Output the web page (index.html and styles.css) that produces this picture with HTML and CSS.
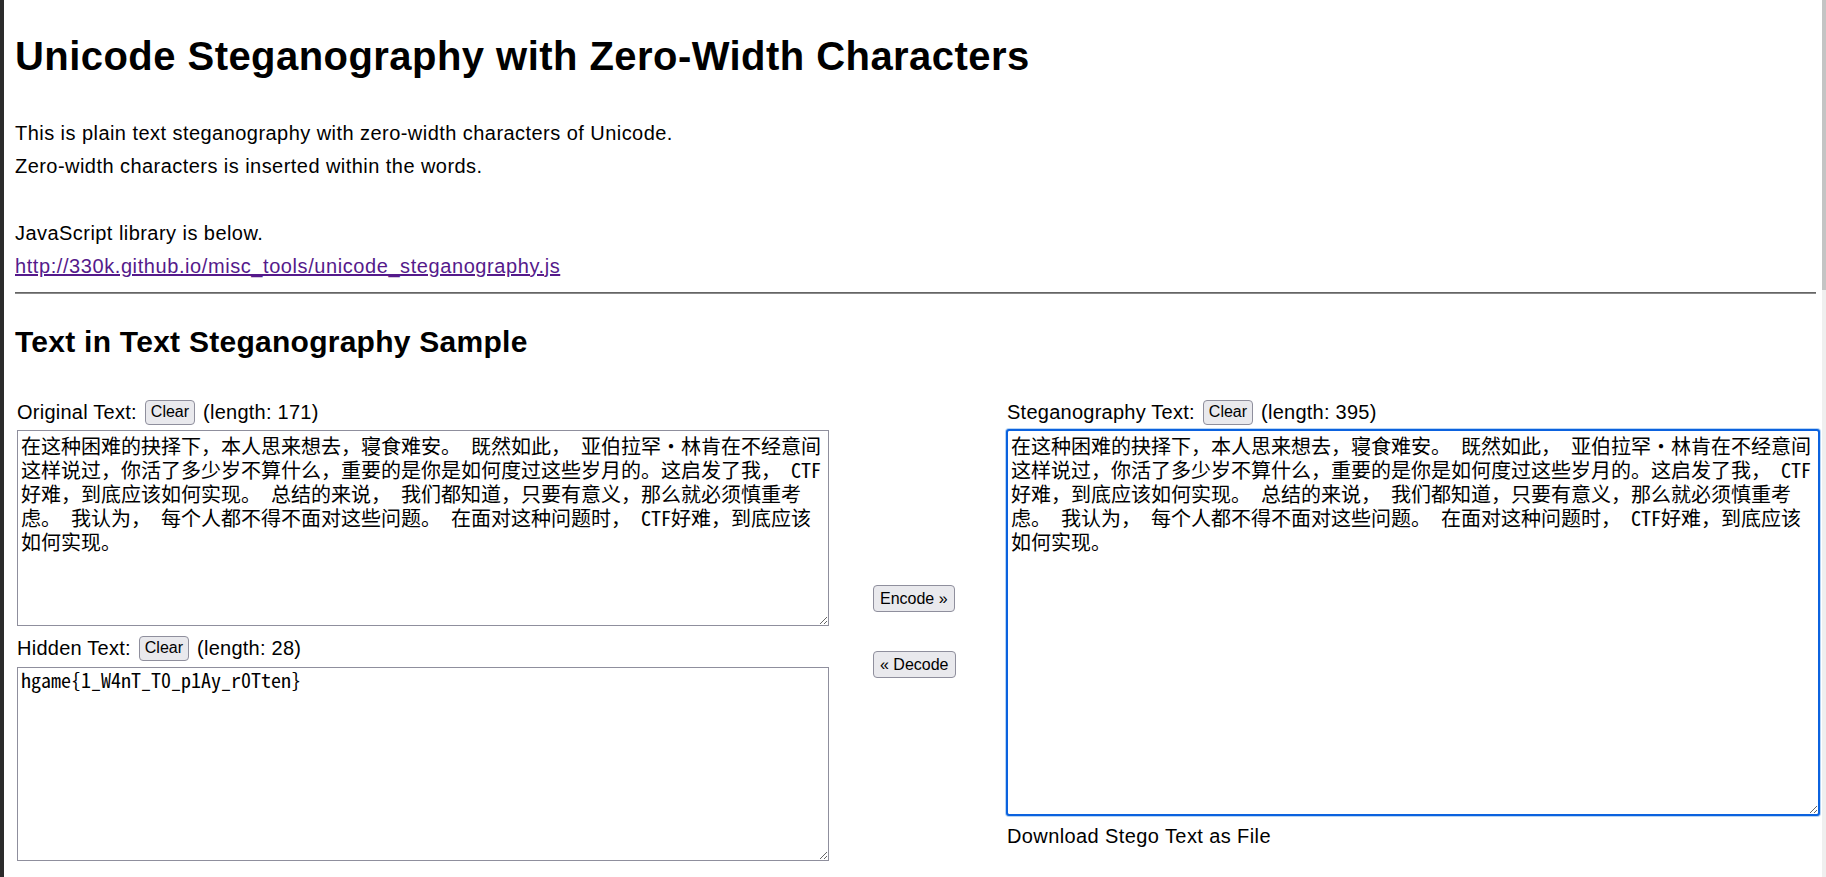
FILE: index.html
```html
<!DOCTYPE html>
<html lang="en">
<head>
<meta charset="utf-8">
<title>Unicode Steganography with Zero-Width Characters</title>
<link rel="stylesheet" href="styles.css">
</head>
<body>
<div class="edge-left"></div>
<div class="page">
  <h1 class="title">Unicode Steganography with Zero-Width Characters</h1>
  <p class="intro">This is plain text steganography with zero-width characters of Unicode.<br>Zero-width characters is inserted within the words.<br><br>JavaScript library is below.<br><a class="lib-link" href="#">http://330k.github.io/misc_tools/unicode_steganography.js</a></p>
  <hr class="rule">
  <h2 class="subtitle">Text in Text Steganography Sample</h2>
  <div class="sample">
    <div class="col col-left">
      <div class="label-row"><span class="label">Original Text:</span><button class="btn-clear" type="button">Clear</button><span class="label">(length: 171)</span></div>
      <textarea class="box box-original">在这种困难的抉择下，本人思来想去，寝食难安。 既然如此， 亚伯拉罕·林肯在不经意间
这样说过，你活了多少岁不算什么，重要的是你是如何度过这些岁月的。这启发了我， CTF
好难，到底应该如何实现。 总结的来说， 我们都知道，只要有意义，那么就必须慎重考
虑。 我认为， 每个人都不得不面对这些问题。 在面对这种问题时， CTF好难，到底应该
如何实现。</textarea>
      <div class="label-row label-row-second"><span class="label">Hidden Text:</span><button class="btn-clear" type="button">Clear</button><span class="label">(length: 28)</span></div>
      <textarea class="box box-hidden">hgame{1_W4nT_T0_p1Ay_r0Tten}</textarea>
    </div>
    <div class="col-middle">
      <button class="btn-action" type="button">Encode »</button>
      <button class="btn-action" type="button">« Decode</button>
    </div>
    <div class="col col-right">
      <div class="label-row"><span class="label">Steganography Text:</span><button class="btn-clear" type="button">Clear</button><span class="label">(length: 395)</span></div>
      <textarea class="box box-stego">在这种困难的抉择下，本人思来想去，寝食难安。 既然如此， 亚伯拉罕·林肯在不经意间
这样说过，你活了多少岁不算什么，重要的是你是如何度过这些岁月的。这启发了我， CTF
好难，到底应该如何实现。 总结的来说， 我们都知道，只要有意义，那么就必须慎重考
虑。 我认为， 每个人都不得不面对这些问题。 在面对这种问题时， CTF好难，到底应该
如何实现。</textarea>
      <div class="download">Download Stego Text as File</div>
    </div>
  </div>
</div>
<div class="edge-right"></div>
</body>
</html>
```

FILE: styles.css
```css
html {
  overflow: hidden;
}

body {
  margin: 0;
  display: flex;
  min-height: 877px;
  background: #ffffff;
  color: #000000;
  font-family: "Liberation Sans", Arial, sans-serif;
}

.edge-left {
  flex: none;
  width: 4px;
  background: #2b2b2b;
}

.edge-right {
  flex: none;
  width: 4px;
  background: linear-gradient(#c4c4c4 0, #c4c4c4 290px, #efefef 290px, #efefef 100%);
}

.page {
  flex: 1;
  min-width: 0;
  padding: 0 6px 0 11px;
}

.title {
  margin: 33px 0 0;
  font-size: 40px;
  font-weight: bold;
  line-height: 46px;
  letter-spacing: 0.45px;
}

.intro {
  margin: 38px 0 0;
  font-size: 20px;
  line-height: 33.25px;
  letter-spacing: 0.45px;
}

.lib-link {
  color: #551a8b;
  text-decoration: underline;
  letter-spacing: 0.58px;
}

.rule {
  margin: 8.5px 0 0;
  height: 0;
  border: 0;
  border-top: 1px solid #656565;
  border-bottom: 1px solid #8a8a8a;
}

.subtitle {
  margin: 30px 0 0;
  font-size: 30px;
  font-weight: bold;
  line-height: 35px;
  letter-spacing: 0.26px;
}

.sample {
  display: grid;
  grid-template-columns: 812px 178px 812px;
  margin: 41px -3px 0 2px;
}

.col {
  display: flex;
  flex-direction: column;
  align-items: flex-start;
}

.label-row {
  display: flex;
  align-items: center;
  gap: 8px;
  height: 25px;
}

.label-row-second {
  margin-top: 10px;
}

.label {
  font-size: 20px;
  line-height: 25px;
  letter-spacing: 0.25px;
  white-space: nowrap;
  padding-top: 1px;
}

.btn-clear,
.btn-action {
  box-sizing: border-box;
  margin: 0;
  background: #e9e9ed;
  border: 1px solid #8f8f9d;
  border-radius: 4px;
  color: #000000;
  font-family: "Liberation Sans", Arial, sans-serif;
  font-size: 16px;
  line-height: 18px;
}

.btn-clear {
  height: 25px;
  padding: 0 5px;
}

.btn-action {
  height: 27px;
  padding: 0 6px;
}

.box {
  box-sizing: border-box;
  display: block;
  width: 812px;
  margin: 5px 0 0;
  padding: 3px 3px 2px 3px;
  border: 1px solid #8f8f9d;
  border-radius: 0;
  background: #ffffff;
  color: #000000;
  font-family: "Noto Sans Mono CJK SC", "Noto Sans CJK SC", "Liberation Mono", monospace;
  font-size: 20px;
  line-height: 24px;
  white-space: pre-wrap;
  overflow: hidden;
}

.box-original {
  height: 196px;
}

.box-hidden {
  margin-top: 6px;
  height: 194px;
  padding-top: 0;
}

.box-stego {
  height: 385px;
  border-radius: 2px;
  outline: 2px solid #0b62df;
  outline-offset: -1px;
  box-shadow: 0 0 0 2px #b7d5f5;
}

.col-middle {
  display: flex;
  flex-direction: column;
  justify-content: center;
  align-items: flex-start;
  gap: 39px;
  padding: 3px 0 0 44px;
}

.download {
  margin-top: 8px;
  font-size: 20px;
  line-height: 26px;
  letter-spacing: 0.4px;
}
```
